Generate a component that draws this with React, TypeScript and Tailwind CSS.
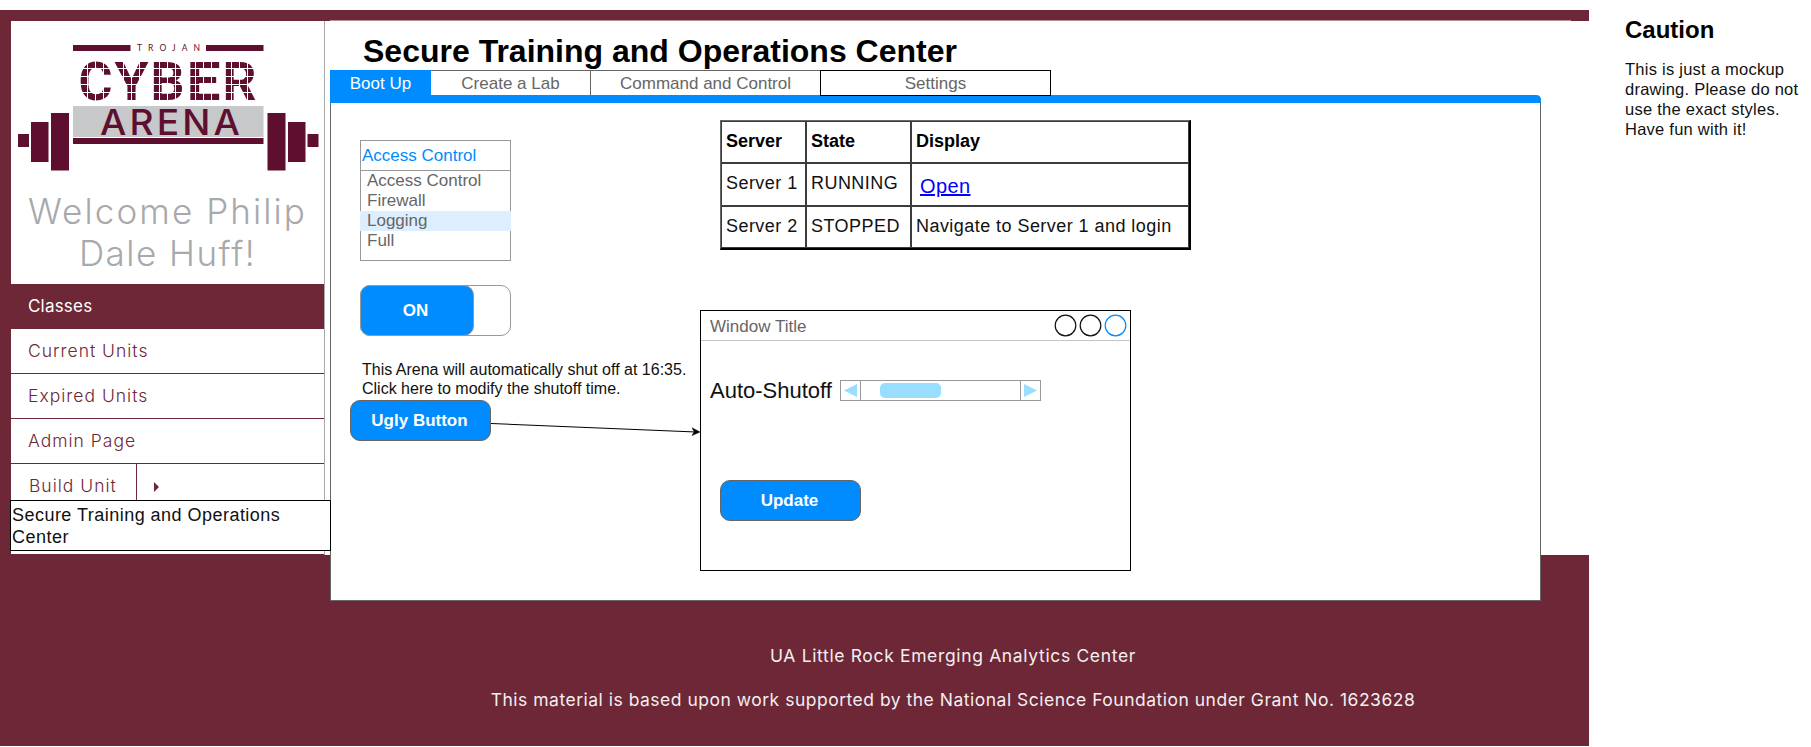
import React from "react";

const menu = ["Current Units", "Expired Units", "Admin Page"];
const options = ["Access Control", "Firewall", "Logging", "Full"];

function Logo() {
  const columns = [80, 116, 152, 188, 224];
  return (
    <svg className="block" width="313" height="160" viewBox="11 21 313 160" fill="#5e0f2f">
      <rect x="73" y="45" width="57.5" height="6" />
      <rect x="206" y="45" width="57.5" height="6" />
      <text x="137" y="51" fontFamily="Lato, sans-serif" fontSize="8.500" textLength="63">TROJAN</text>
      {"CYBER".split("").map((ch, i) => (
        <text key={i} x={columns[i] - 1.5} y="100" fontFamily="Roboto, sans-serif" fontWeight="700" fontSize="54.500" textLength="34" lengthAdjust="spacingAndGlyphs">{ch}</text>
      ))}
      <g fill="#fff">
        {[68, 76, 84, 92].map((y) => <rect key={y} x="78" y={y} width="180" height="1" />)}
        {columns.flatMap((c) => [7, 15, 23].map((d) => <rect key={c + d} x={c + d} y="60" width="1" height="41" />))}
      </g>
      <rect x="73" y="106" width="190.500" height="31" fill="#c6c8ca" />
      <rect x="73" y="138" width="190.500" height="6" />
      <text x="100" y="135" fontFamily="Inter, sans-serif" fontWeight="500" fontSize="35.500" letterSpacing="3" textLength="143" lengthAdjust="spacingAndGlyphs">ARENA</text>
      <rect x="18" y="134" width="11" height="13" />
      <rect x="31" y="122" width="17.500" height="40" />
      <rect x="51" y="113" width="18" height="57.500" />
      <rect x="267.500" y="113" width="18" height="57.500" />
      <rect x="288" y="122" width="17.500" height="40" />
      <rect x="307.500" y="134" width="11" height="13" />
    </svg>
  );
}

function Sidebar() {
  return (
    <aside className="flex h-[533px] w-[313px] shrink-0 flex-col bg-white font-['Inter',sans-serif] text-[#6d2737]">
      <Logo />
      <h2 className="h-[103px] pt-[9px] text-center text-[35px] leading-[42px] font-light tracking-[2.1px] text-[#a7a9ac]">
        Welcome Philip
        <br />
        <span className="tracking-[1.5px]">Dale Huff!</span>
      </h2>
      <nav className="text-[17.5px] leading-[44px] font-light tracking-[1px]">
        <div className="h-[45px] bg-[#6d2737] pl-[17px] text-[17px] font-normal tracking-[0.2px] text-white">Classes</div>
        {menu.map((m) => (
          <div key={m} className="h-[45px] border-b border-[#6d2737] pl-[17px]">{m}</div>
        ))}
        <div className="flex h-[36px]">
          <div className="w-[126px] border-r border-[#6d2737] pl-[18px]">Build Unit</div>
          <svg className="mt-[18px] ml-[17px]" width="6" height="10"><path d="M0 0L5 5L0 10Z" fill="#6d2737" /></svg>
        </div>
      </nav>
      <div className="z-10 -ml-px h-[51px] w-[321px] border border-black bg-white pt-[4px] pl-px font-['Liberation_Sans',sans-serif] text-[18px] leading-[21.6px] tracking-[0.47px] text-[#111]">
        Secure Training and Operations
        <br />
        Center
      </div>
    </aside>
  );
}

function Tabs() {
  return (
    <div className="flex h-[25px] text-center text-[17px] leading-[27px] text-[#666]">
      <div className="w-[101px] bg-[#008cff] text-white">Boot Up</div>
      <div className="w-[160px] border-t border-r border-[#666] leading-[25px]">Create a Lab</div>
      <div className="w-[229px] border-t border-[#666] leading-[25px]">Command and Control</div>
      <div className="z-10 h-[26px] w-[231px] border border-black leading-[25px]">Settings</div>
    </div>
  );
}

function Button({ label }: { label: string }) {
  return (
    <button className="block h-[41px] w-[141px] rounded-[10px] border border-[#666] bg-[#008cff] pr-[2px] text-center text-[17px] leading-[38px] font-bold text-white">
      {label}
    </button>
  );
}

function Controls() {
  return (
    <div className="w-[369px] shrink-0 pt-[37px] pl-[19px]">
      <div className="ml-[10px] h-[121px] w-[151px] border border-[#999] text-[17px]">
        <div className="h-[30px] border-b border-[#999] pl-px leading-[29px] text-[#008cff]">Access Control</div>
        {options.map((o) => (
          <div key={o} className={o === "Logging" ? "-mx-px h-5 bg-[#ddeeff] pl-[7px] leading-[20px] text-[#666]" : "h-5 pl-[6px] leading-[20px] text-[#666]"}>{o}</div>
        ))}
      </div>
      <div className="mt-6 ml-[10px] h-[51px] w-[151px] rounded-[10px] border border-[#999]">
        <div className="-mt-px -ml-px h-[51px] w-[114px] rounded-[10px] border border-[#999] bg-[#008cff] pr-[3px] text-center text-[17px] leading-[49px] font-bold text-white">ON</div>
      </div>
      <p className="mt-[24px] ml-[12px] h-[40px] text-[16px] leading-[19.2px] whitespace-nowrap text-[#111]">
        This Arena will automatically shut off at 16:35.
        <br />
        Click here to modify the shutoff time.
      </p>
      <Button label="Ugly Button" />
    </div>
  );
}

function ServerTable() {
  const cell = "border border-[#3c3c3c] pl-1 pb-[2px] text-left";
  return (
    <div className="ml-[20px] h-[130px] w-[471px] border-t border-r-2 border-b-2 border-l border-t-[#666] border-r-black border-b-black border-l-[#666]">
      <table className="h-[127px] w-[468px] table-fixed border-separate border-spacing-0 text-[18px] leading-[21px] tracking-[0.45px] text-[#111]">
        <colgroup>
          <col className="w-[85px]" />
          <col className="w-[105px]" />
          <col />
        </colgroup>
        <tbody>
          <tr className="h-[42px] tracking-normal text-black"><th className={cell}>Server</th><th className={cell}>State</th><th className={cell}>Display</th></tr>
          <tr className="h-[43px]"><td className={cell}>Server 1</td><td className={cell}>RUNNING</td><td className={cell}><a className="relative top-[3px] ml-1 text-[20px] tracking-[0.4px] text-[#0000ff] underline">Open</a></td></tr>
          <tr className="h-[42px]"><td className={cell}>Server 2</td><td className={cell}>STOPPED</td><td className={cell}>Navigate to Server 1 and login</td></tr>
        </tbody>
      </table>
    </div>
  );
}

function ShutoffWindow() {
  return (
    <div className="mt-[60px] h-[261px] w-[431px] border border-black bg-white">
      <div className="flex h-[30px] items-center border-b border-[#c4c4c4] pl-[9px]">
        <span className="flex-1 pt-px text-[17px] leading-[29px] text-[#666]">Window Title</span>
        <svg width="76" height="29" fill="none" strokeWidth="1.2">
          <circle cx="11.500" cy="14.500" r="10.300" stroke="#111" />
          <circle cx="36.500" cy="14.500" r="10.300" stroke="#111" />
          <circle cx="61.500" cy="14.500" r="10.300" stroke="#008cff" />
        </svg>
      </div>
      <div className="mt-[39px] flex h-[21px] items-center pl-[9px]">
        <span className="w-[130px] text-[22px] leading-[21px] whitespace-nowrap text-[#111]">Auto-Shutoff</span>
        <div className="flex h-[21px] w-[201px] items-center border border-[#999]">
          <svg className="shrink-0" width="19" height="19"><path d="M3 9.500L16 3V16Z" fill="#99ddff" /></svg>
          <div className="h-full flex-1 border-x border-[#999] pt-[2px] pl-[19px]">
            <div className="h-[15px] w-[61px] rounded-[5px] bg-[#99ddff]" />
          </div>
          <svg className="shrink-0" width="19" height="19"><path d="M16 9.500L3 3V16Z" fill="#99ddff" /></svg>
        </div>
      </div>
      <div className="mt-[79px] ml-[19px]"><Button label="Update" /></div>
    </div>
  );
}

export default function App() {
  return (
    <div className="flex h-[747px] w-[1811px] items-start overflow-hidden bg-white pt-[10px] font-['Liberation_Sans',sans-serif]">
      <div className="h-[736px] w-[1589px] shrink-0 bg-[#6d2737] pt-[11px]">
        <div className="flex h-[534px] pl-[11px]">
          <Sidebar />
          <div className="h-[534px] w-[6px] shrink-0 border-l border-[#a7a9ac] bg-white" />
          <main className="h-[534px] flex-1 bg-white">
            <div className="-mt-px h-px w-[1241px] bg-[#b58e98]" />
            <h1 className="h-[49px] pt-[12px] pl-[33px] text-[32px] leading-[36px] font-bold whitespace-nowrap text-black">Secure Training and Operations Center</h1>
            <Tabs />
            <div className="relative h-[506px] w-[1211px] rounded-tr-[5px] border border-t-0 border-[#666] bg-white">
              <div className="-mx-px h-2 rounded-tr-[5px] bg-[#008cff]" />
              <div className="flex">
                <Controls />
                <div className="pt-[17px]">
                  <ServerTable />
                  <ShutoffWindow />
                </div>
              </div>
              <svg className="absolute top-[320px] left-[160px]" width="211" height="24">
                <path d="M0 8.500L205 17" stroke="#000" strokeWidth="1.100" />
                <path d="M209 17L201 12.800L203.200 16.800L201 20.600Z" stroke="#000" strokeWidth="0.500" />
              </svg>
            </div>
          </main>
        </div>
        <footer className="pt-[79px] pl-[317px] text-center font-['Inter',sans-serif] text-[17.5px] leading-[44px] text-[#f3eef0]">
          <p className="tracking-[0.65px]">UA Little Rock Emerging Analytics Center</p>
          <p className="tracking-[0.5px]">This material is based upon work supported by the National Science Foundation under Grant No. 1623628</p>
        </footer>
      </div>
      <section className="ml-[36px] pt-[5px] text-[#111]">
        <h2 className="text-[24px] leading-[30px] font-bold text-black">Caution</h2>
        <p className="mt-[14px] w-[180px] text-[16.5px] leading-[20px] tracking-[0.25px]">This is just a mockup drawing. Please do not use the exact styles. Have fun with it!</p>
      </section>
    </div>
  );
}
